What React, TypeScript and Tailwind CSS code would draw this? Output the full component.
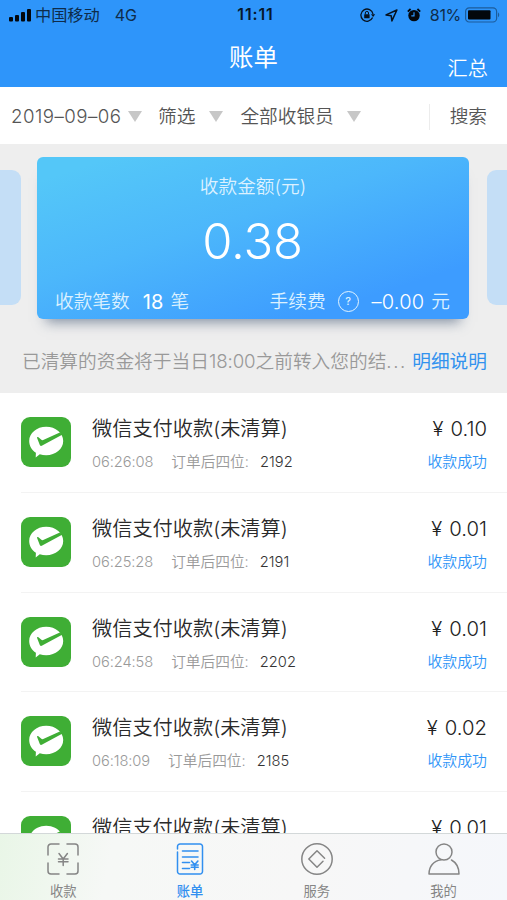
import type { ReactNode } from "react";

type Order = { time: string; tail: string; amount: string };

const orders: Order[] = [
  { time: "06:26:08", tail: "2192", amount: "0.10" },
  { time: "06:25:28", tail: "2191", amount: "0.01" },
  { time: "06:24:58", tail: "2202", amount: "0.01" },
  { time: "06:18:09", tail: "2185", amount: "0.02" },
];

function StatusBar() {
  return (
    <div className="grid h-[30px] grid-cols-[1fr_auto_1fr] items-center text-[#0e2c4a]">
      <div className="flex items-center pl-[9px]">
        <svg width="22" height="14" viewBox="0 0 22 14" className="fill-[#03070c]">
          <rect x="0" y="9" width="4" height="4.5" rx="1" />
          <rect x="6" y="7" width="4" height="6.5" rx="1" />
          <rect x="12" y="4" width="4" height="9.5" rx="1" />
          <rect x="18" y="1" width="4" height="12.5" rx="1" />
        </svg>
        <span className="ml-[4px] text-[16.2px] leading-[20px]">中国移动</span>
        <span className="ml-[15px] text-[16px] leading-[20px]">4G</span>
      </div>
      <span className="pl-[4px] text-[15.8px] leading-[20px] font-semibold tracking-[0.9px] text-[#06182b]">11:11</span>
      <div className="flex items-center justify-end pr-[7px]">
        <svg width="16" height="14" viewBox="0 0 16 14" fill="none" stroke="#06121f" strokeWidth="1.3">
          <path d="M12.600 9.600A6.100 6.100 0 1 1 13 6" />
          <path d="M11 6.200h4.200L13.100 9z" fill="#06121f" stroke="none" />
          <rect x="4.200" y="6.200" width="5.400" height="4" rx=".5" fill="#06121f" stroke="none" />
          <path d="M5.300 6.400V5a1.600 1.600 0 0 1 3.200 0v1.400" strokeWidth="1" />
        </svg>
        <svg width="13" height="13" viewBox="0 0 13 13" fill="none" stroke="#06121f" strokeWidth="1.5" strokeLinejoin="round" className="ml-[9px]">
          <path d="M11.900 1 1 5.900l5.200.9.700 5.100z" />
        </svg>
        <svg width="14" height="14" viewBox="0 0 14 14" className="ml-[9px]">
          <circle cx="7" cy="7.600" r="5.700" fill="#03070c" />
          <path d="M.8 3.700 3.600 1M13.200 3.700 10.400 1" stroke="#03070c" strokeWidth="1.8" />
          <path d="M7 4.300v3.500H4.300" fill="none" stroke="#2e95fa" strokeWidth="1.2" />
        </svg>
        <span className="ml-[9px] text-[16px] leading-[20px] tracking-[-0.3px]">81%</span>
        <svg width="35" height="16" viewBox="0 0 35 16" className="ml-[4px]">
          <rect x=".6" y=".8" width="31" height="14.200" rx="3.600" fill="none" stroke="#1c5c9b" strokeWidth="1.2" />
          <rect x="3" y="3.200" width="22.500" height="9.400" rx="1" fill="#03070c" />
          <path d="M33 5.600c1.600.6 1.600 4 0 4.600z" fill="#1c5c9b" />
        </svg>
      </div>
    </div>
  );
}

function Header() {
  return (
    <header className="h-[87px] shrink-0 bg-[#2e95fa]">
      <StatusBar />
      <div className="grid h-[57px] grid-cols-3 text-white">
        <span />
        <h1 className="pt-[12px] text-center text-[24.4px] leading-[30px]">账单</h1>
        <span className="pt-[26px] pr-[19px] text-right text-[20.2px] leading-[26px] font-[350]">汇总</span>
      </div>
    </header>
  );
}

function Caret() {
  return (
    <svg width="14" height="11" viewBox="0 0 14 11" className="shrink-0 fill-[#c7c7c7]">
      <path d="M0 0h14L7 11z" />
    </svg>
  );
}

function FilterBar() {
  return (
    <div className="flex h-[57px] shrink-0 items-center bg-white pt-[2px] pl-[11px] text-[18.7px] leading-[26px] font-[350] text-[#555]">
      <span className="w-[109px] tracking-[0.45px] whitespace-nowrap">2019–09–06</span>
      <span className="ml-[8px]"><Caret /></span>
      <span className="ml-[16px]">筛选</span>
      <span className="ml-[14px]"><Caret /></span>
      <span className="ml-[17px]">全部收银员</span>
      <span className="ml-[13px]"><Caret /></span>
      <div className="ml-auto flex h-[26px] items-center border-l border-[#ececec] pr-[20px] pl-[20px]">搜索</div>
    </div>
  );
}

function Summary() {
  return (
    <section className="h-[249px] shrink-0 bg-[#eeeeee] pt-[13px]">
      <div className="flex items-start">
        <div className="mt-[13px] h-[135px] w-[21px] rounded-r-[9px] bg-[#c4def6]" />
        <div className="ml-[16px] flex h-[162px] w-[432px] flex-col rounded-[6px] bg-[linear-gradient(162deg,#54c7f8_8%,#4cb7fb_42%,#3d9cff_82%)] text-white shadow-[0_12px_12px_-9px_rgba(70,90,120,0.65)]">
          <div className="pt-[17px] text-center text-[18.7px] leading-[26px] font-[350] text-[#dcf1ff]">收款金额(元)</div>
          <div className="pt-[13px] pr-px text-center text-[49px] leading-[58px] font-[350] tracking-[-0.2px]">0.38</div>
          <div className="mt-[17px] flex items-center justify-between pr-[19px] pl-[18px] text-[18.7px] leading-[28px] font-[350] text-[#dcf1ff]">
            <div className="flex items-center">
              <span>收款笔数</span>
              <span className="ml-[13px] text-[20px] font-normal tracking-[0.1px] text-white">18</span>
              <span className="ml-[7px]">笔</span>
            </div>
            <div className="flex items-center">
              <span>手续费</span>
              <span className="mb-px ml-[12px] flex size-[21px] items-center justify-center rounded-full border-[1.4px] border-[#e2f4ff] text-[11px] leading-none font-medium">?</span>
              <span className="ml-[13px] text-[20px] tracking-[0.2px] text-white">–0.00</span>
              <span className="ml-[7px]">元</span>
            </div>
          </div>
        </div>
        <div className="mt-[13px] ml-[18px] h-[135px] w-[20px] rounded-l-[9px] bg-[#c4def6]" />
      </div>
      <div className="mt-[30px] flex items-center justify-between pr-[20px] pl-[22px] text-[18.7px] leading-[26px] whitespace-nowrap">
        <span className="font-[350] text-[#999]">已清算的资金将于当日<span className="tracking-[-0.1px]">18:00</span>之前转入您的结<span className="tracking-[1.6px]">...</span></span>
        <a className="text-[#3292ee]">明细说明</a>
      </div>
    </section>
  );
}

function WeChatPayIcon() {
  return (
    <svg width="50" height="50" viewBox="0 0 50 50" className="shrink-0">
      <rect width="50" height="50" rx="9" fill="#3fae35" />
      <path d="M25.200 9.800c9.500 0 17 6.300 17 14.200s-7.500 14.200-17 14.200c-2.300 0-4.400-.3-6.400-1L14.700 40.500l.2-4.700C10.800 33.200 8.200 28.900 8.200 24c0-7.900 7.500-14.200 17-14.200z" fill="#fff" />
      <path d="M16 20.800c0-.9.700-1 1.400-.5l3.300 2.700c.5.300 1 .3 1.500.1L38.800 15.600 41.600 17.400 21.200 28.600c-1.100.6-1.900.4-2.400-.7z" fill="#3fae35" />
    </svg>
  );
}

function OrderRow({ order, last }: { order: Order; last?: boolean }) {
  return (
    <li className="flex h-[99.8px] shrink-0 pl-[21px]">
      <div className={`flex flex-1 pr-[20px] ${last ? "" : "border-b border-[#f3f3f3]"}`}>
        <div className="pt-[24px]"><WeChatPayIcon /></div>
        <div className="ml-[21px] pt-[22px] whitespace-nowrap">
          <div className="text-[20.2px] leading-[28px] font-[350] text-[#2a2a2a]">微信支付收款(未清算)</div>
          <div className="mt-[7px] flex items-center text-[14.7px] leading-[24px] font-[350] text-[#9a9a9a]">
            <span className="tracking-[-0.1px]">{order.time}</span>
            <span className="ml-[18px]">订单后四位:</span>
            <span className="ml-[11px] tracking-[0.05px] text-[#333]">{order.tail}</span>
          </div>
        </div>
        <div className="ml-auto pt-[22px] text-right">
          <div className="text-[20.3px] leading-[28px] font-[350] text-[#222]"><span className="mr-[7px]">¥</span>{order.amount}</div>
          <div className="mt-[7px] text-[14.9px] leading-[24px] font-[350] text-[#2f95f7]">收款成功</div>
        </div>
      </div>
    </li>
  );
}

function Tab({ label, active, children }: { label: string; active?: boolean; children: ReactNode }) {
  return (
    <div className={`flex flex-1 flex-col items-center pt-[9px] ${active ? "text-[#318ff0]" : "text-[#858585]"}`}>
      <svg width="34" height="34" viewBox="0 0 34 34" fill="none" stroke="currentColor" strokeWidth="1.5" strokeLinecap="round" strokeLinejoin="round">
        {children}
      </svg>
      <span className={`mt-[5px] text-[13.300px] leading-[18px] ${active ? "font-medium" : ""}`}>{label}</span>
    </div>
  );
}

function TabBar() {
  return (
    <nav className="flex h-[67px] shrink-0 border-t border-[#d3d8d9] bg-[linear-gradient(100deg,#e9f6e7_0%,#f6f8f6_22%,#f7f7f7_60%,#f5f7fb_100%)]">
      <Tab label="收款">
        <path d="M2 12V4a3 3 0 0 1 3-3h8M21 1h8a3 3 0 0 1 3 3v8M32 20v8a3 3 0 0 1-3 3h-8M13 31H5a3 3 0 0 1-3-3v-8" />
        <path d="m13 10.500 4.200 5.500 4.200-5.500M12.500 16h9.500M12.500 18.800h9.500M17.200 16v6.500" />
      </Tab>
      <Tab label="账单" active>
        <path d="M4.500 6V3.500A2.500 2.500 0 0 1 7 1h20a2.500 2.500 0 0 1 2.500 2.500v25A2.500 2.500 0 0 1 27 31H7a2.500 2.500 0 0 1-2.500-2.500V9" />
        <path d="M9.500 8h15.500M9.500 14h15.500M9.500 19.500h7M9.500 25.500h7M18.500 18l3.200 3.800 3.200-3.800M18.200 22h7M18.200 24.300h7M21.700 22v4.500" strokeWidth="1.6" />
      </Tab>
      <Tab label="服务">
        <circle cx="17" cy="16" r="15.200" />
        <path d="m24.600 15.300-7.600-7.500-8.200 8.200 8.200 8.200 6-6" />
      </Tab>
      <Tab label="我的">
        <circle cx="17" cy="9" r="8" />
        <path d="M14 16.800C6.500 18 2 23.500 2 31h30c0-6-3-11.500-7.500-14" />
      </Tab>
    </nav>
  );
}

export default function App() {
  return (
    <div className="flex h-[900px] w-[507px] flex-col overflow-hidden bg-white font-['Inter','Noto_Sans_CJK_SC',sans-serif]">
      <Header />
      <FilterBar />
      <Summary />
      <ul className="flex min-h-0 flex-1 flex-col overflow-hidden">
        {orders.map((order) => (
          <OrderRow key={order.time} order={order} />
        ))}
        <OrderRow order={{ time: "06:17:32", tail: "2184", amount: "0.01" }} last />
      </ul>
      <TabBar />
    </div>
  );
}
